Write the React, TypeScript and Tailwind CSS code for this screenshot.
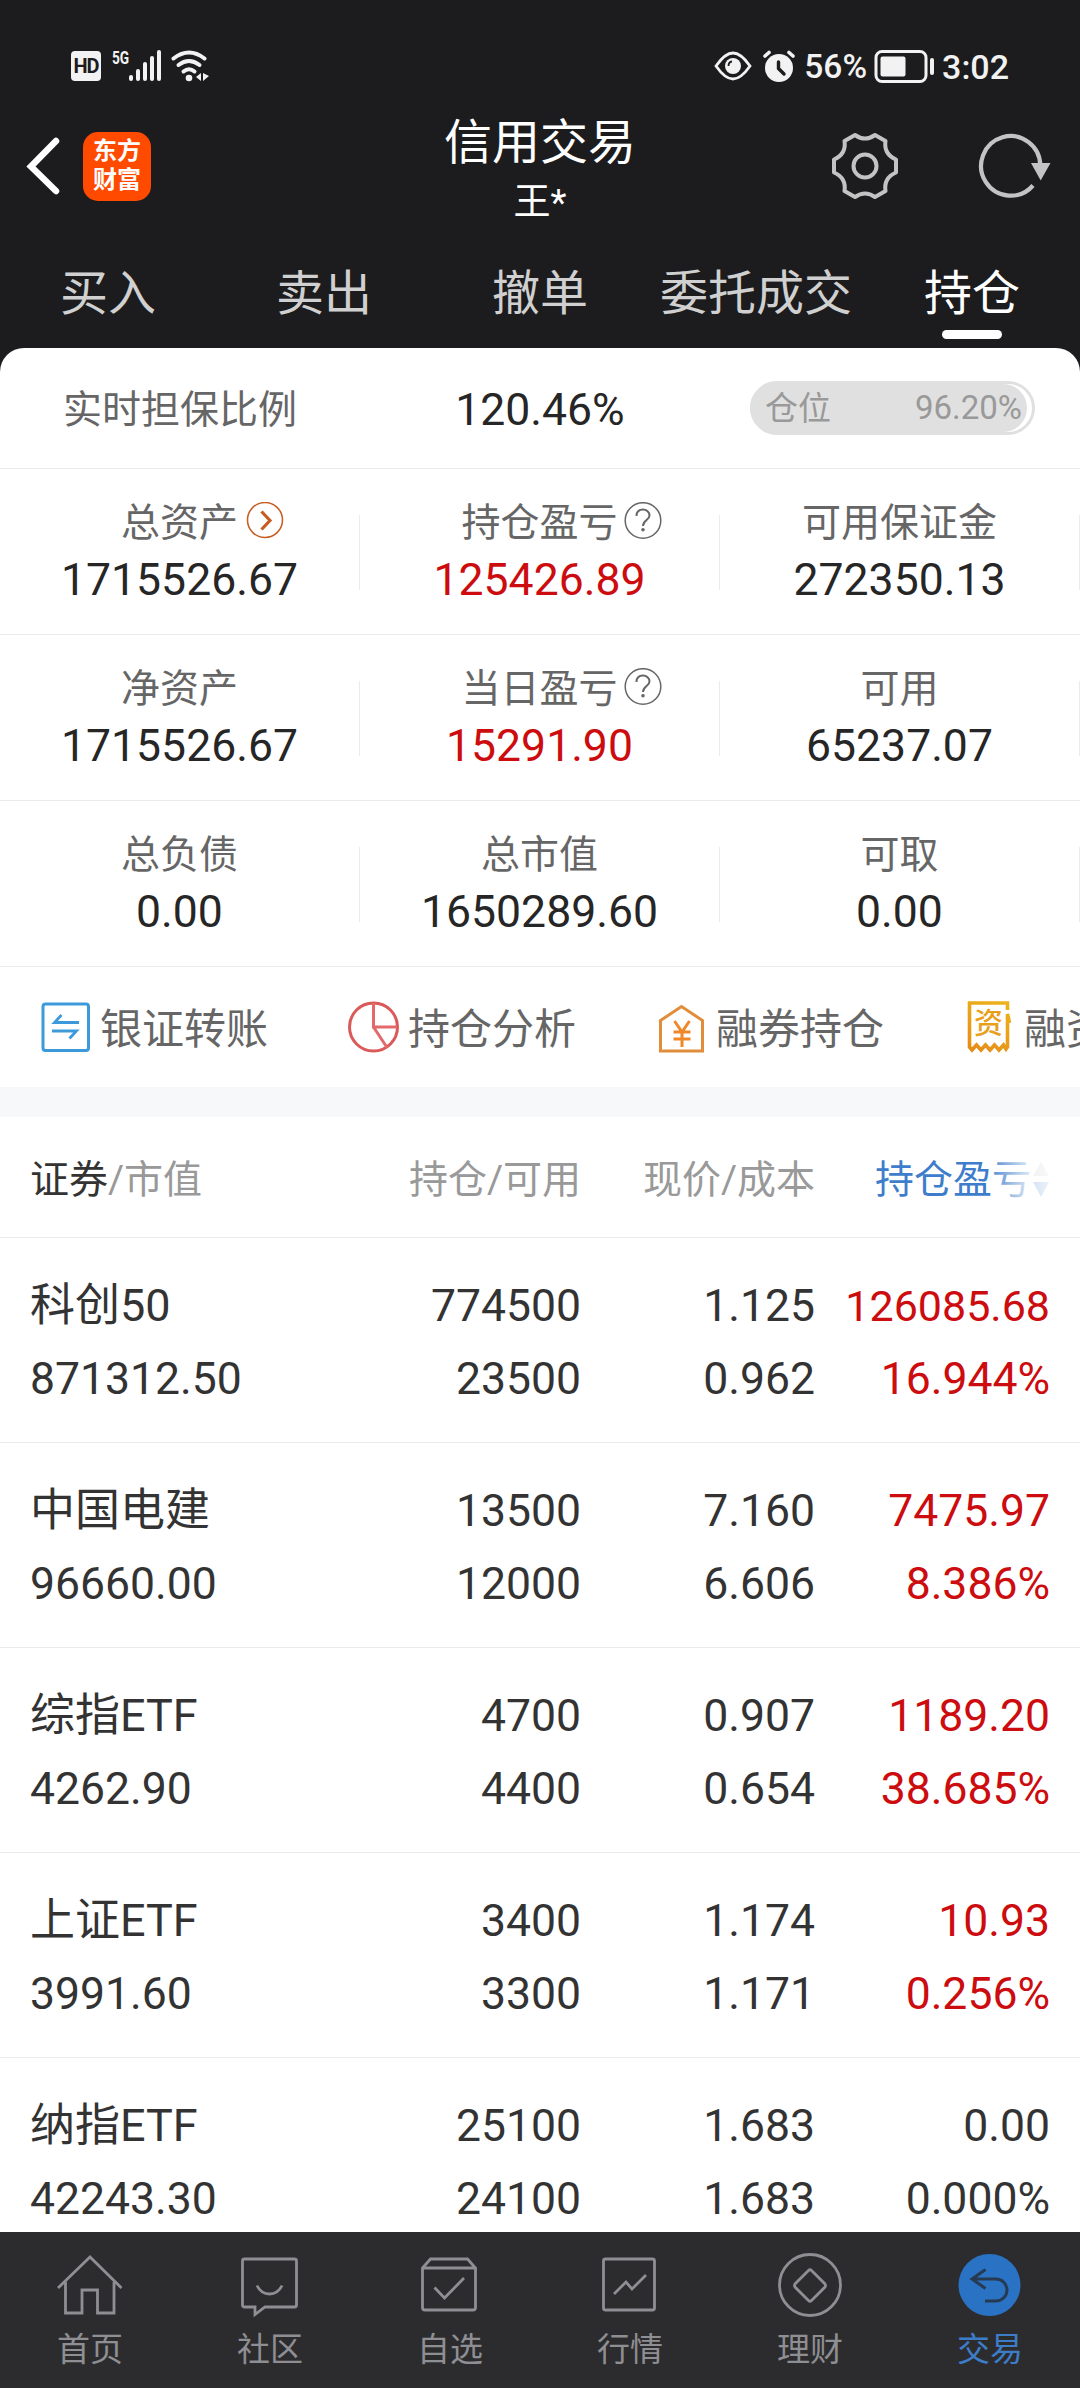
import React from "react";

const tabs = ["买入", "卖出", "撤单", "委托成交", "持仓"];

type Stat = { label: string; value: string; up?: boolean; icon?: "more" | "help" };

const stats: Stat[][] = [
  [
    { label: "总资产", value: "1715526.67", icon: "more" },
    { label: "持仓盈亏", value: "125426.89", up: true, icon: "help" },
    { label: "可用保证金", value: "272350.13" },
  ],
  [
    { label: "净资产", value: "1715526.67" },
    { label: "当日盈亏", value: "15291.90", up: true, icon: "help" },
    { label: "可用", value: "65237.07" },
  ],
  [
    { label: "总负债", value: "0.00" },
    { label: "总市值", value: "1650289.60" },
    { label: "可取", value: "0.00" },
  ],
];

const holdings = [
  { name: "科创50", value: "871312.50", qty: "774500", avail: "23500", price: "1.125", cost: "0.962", pl: "126085.68", rate: "16.944%", up: true },
  { name: "中国电建", value: "96660.00", qty: "13500", avail: "12000", price: "7.160", cost: "6.606", pl: "7475.97", rate: "8.386%", up: true },
  { name: "综指ETF", value: "4262.90", qty: "4700", avail: "4400", price: "0.907", cost: "0.654", pl: "1189.20", rate: "38.685%", up: true },
  { name: "上证ETF", value: "3991.60", qty: "3400", avail: "3300", price: "1.174", cost: "1.171", pl: "10.93", rate: "0.256%", up: true },
  { name: "纳指ETF", value: "42243.30", qty: "25100", avail: "24100", price: "1.683", cost: "1.683", pl: "0.00", rate: "0.000%", up: false },
];

const StatusBar: React.FC = () => (
  <div className="h-[100px] shrink-0 pl-[71px] pr-[71px] pt-8 flex items-center justify-between text-[#f2f2f2]">
    <div className="flex items-center">
      <div className="w-[30px] h-[30px] rounded-[4px] bg-[#f2f2f2] text-[#1c1c1e] text-[20px] leading-[30px] font-bold text-center tracking-[-1px]">
        HD
      </div>
      <span className="ml-[11px] mb-[17px] w-[17px] text-[19px] leading-[20px] font-bold origin-left scale-x-[0.72]">5G</span>
      <svg width="33" height="32" viewBox="17 0 33 32" fill="currentColor">
        <rect x="17" y="25" width="4" height="6" rx="2" />
        <rect x="24" y="19" width="4" height="12" rx="2" />
        <rect x="31" y="12" width="4" height="19" rx="2" />
        <rect x="38" y="6" width="4" height="25" rx="2" />
        <rect x="45" y="0" width="4" height="31" rx="2" />
      </svg>
      <svg className="ml-[9px]" width="38" height="32" viewBox="0 0 38 32" fill="none" stroke="currentColor" strokeWidth="4" strokeLinecap="round">
        <path d="M2.500 8.500Q18 -3.500 33.500 8.500" />
        <path d="M7.500 15Q18 7 28.500 15" />
        <path d="M12.500 21.500Q18 17 23.500 21.500" />
        <circle cx="18" cy="28" r="3.300" fill="currentColor" stroke="none" />
        <path d="M30 23v8l-5-4zM32 23v8l6-5z" fill="currentColor" stroke="none" />
      </svg>
    </div>
    <div className="flex items-center">
      <svg width="38" height="30" viewBox="0 0 38 30" fill="none" stroke="currentColor" strokeWidth="2.800">
        <path d="M2 15C9 5 14 2 19 2S29 5 36 15C29 25 24 28 19 28S9 25 2 15Z" />
        <circle cx="19" cy="15" r="8" fill="currentColor" stroke="none" />
        <path d="M14.500 15Q14.500 11 18 10.500" stroke="#1c1c1e" strokeWidth="1.800" />
      </svg>
      <svg className="ml-[11px]" width="32" height="32" viewBox="0 0 32 32" fill="none" stroke="currentColor" strokeLinecap="round">
        <circle cx="16" cy="18" r="14" fill="currentColor" stroke="none" />
        <path d="M2 6L6 2.500M30 6L26 2.500" strokeWidth="3.600" />
        <path d="M15.500 12v6.500l5.500 5.500" stroke="#1c1c1e" strokeWidth="3.400" />
      </svg>
      <span className="ml-[9px] pt-[2px] text-[33.500px] leading-[34px] font-medium">56%</span>
      <svg className="ml-[7px]" width="62" height="33" viewBox="0 0 62 33" fill="none" stroke="currentColor" strokeWidth="3">
        <rect x="2" y="1.500" width="50" height="30" rx="6" />
        <rect x="6.500" y="6.500" width="25" height="20" rx="2" fill="currentColor" stroke="none" />
        <rect x="56" y="8" width="4" height="17" rx="2" fill="currentColor" stroke="none" />
      </svg>
      <span className="ml-[6px] pt-[2px] text-[34px] leading-[34px] font-medium">3:02</span>
    </div>
  </div>
);

const TitleBar: React.FC = () => (
  <div className="h-[138px] shrink-0 grid grid-cols-3 text-white">
    <div className="flex items-center pl-[26px] pb-[6px]">
      <svg width="34" height="58" viewBox="0 0 34 58" fill="none" stroke="currentColor" strokeWidth="6.500" strokeLinecap="round">
        <path d="M30 4L5 29.500L30 54" />
      </svg>
      <div className="ml-[23px] w-[68px] h-[69px] rounded-[15px] bg-[#ff4a00] flex flex-col items-center justify-center font-bold text-[24px] leading-[29px]">
        <span>东方</span>
        <span>财富</span>
      </div>
    </div>
    <div className="flex flex-col items-center pt-[19px]">
      <h1 className="text-[48px] leading-[48px]">信用交易</h1>
      <span className="mt-[17px] text-[37px] leading-[37px]">王*</span>
    </div>
    <div className="flex items-center justify-end pr-[29px] pb-[6px] text-[#c3c3c3]">
      <svg width="68" height="68" viewBox="0 0 68 68" fill="none" stroke="currentColor" strokeWidth="4" strokeLinejoin="round">
        <circle cx="34" cy="34" r="11.500" />
        <path d="M24 3Q34 10 44 3L54.500 9Q52.500 22 65 27.500V40.500Q52.500 46 54.500 59L44 65Q34 58 24 65L13.500 59Q15.500 46 3 40.500V27.500Q15.500 22 13.500 9Z" />
      </svg>
      <svg className="ml-[78px]" width="74" height="68" viewBox="0 0 74 68" fill="none" stroke="currentColor" strokeWidth="4.200">
        <path d="M63.300 34A29.600 29.800 0 1 0 56 53.500" />
        <path d="M54 31H73.500L63.700 48.500Z" fill="currentColor" stroke="none" />
      </svg>
    </div>
  </div>
);

const Tabs: React.FC = () => (
  <nav className="h-[110px] shrink-0 grid grid-cols-5 text-[48px] leading-[48px] text-[#d0d0d0]">
    {tabs.map((tab) => (
      <div key={tab} className={`flex flex-col items-center pt-[32px] whitespace-nowrap ${tab === "持仓" ? "text-white" : ""}`}>
        {tab}
        {tab === "持仓" && <div className="mt-[12px] w-[60px] h-[9px] rounded-full bg-white" />}
      </div>
    ))}
  </nav>
);

const MoreIcon: React.FC = () => (
  <svg className="ml-[2px]" width="38" height="38" viewBox="0 0 38 38" fill="none" stroke="#c75d21">
    <circle cx="19" cy="18" r="17.500" strokeWidth="1.500" />
    <path d="M15.500 9.500L24 18.500L15.500 27.500" strokeWidth="3.200" />
  </svg>
);

const HelpIcon: React.FC = () => (
  <svg width="38" height="38" viewBox="0 0 38 38" fill="none" stroke="#666" strokeWidth="1.500">
    <circle cx="19" cy="18.500" r="17.800" />
    <path d="M12.500 14C12.500 9.500 15.500 7.500 19 7.500S25.500 10 25.500 13.500C25.500 18 19 18 19 24" strokeWidth="2" />
    <circle cx="19" cy="27.800" r="1.800" fill="#666" stroke="none" />
  </svg>
);

const StatRow: React.FC<{ items: Stat[] }> = ({ items }) => (
  <div className="h-[166px] shrink-0 grid grid-cols-3 items-center border-b border-[#ebebeb]">
    {items.map((item) => (
      <div key={item.label} className="h-[166px] flex items-center">
        <div className="flex-1 flex flex-col items-center pt-[1px]">
          <div className="relative text-[39px] leading-[40px] text-[#666]">
            {item.label}
            {item.icon && (
              <span className="absolute left-full -top-px ml-[6px]">
                {item.icon === "more" ? <MoreIcon /> : <HelpIcon />}
              </span>
            )}
          </div>
          <div className={`mt-[14px] text-[44.500px] leading-[46px] ${item.up ? "text-[#cc0c0e]" : "text-[#262626]"}`}>
            {item.value}
          </div>
        </div>
        <div className="w-px h-[75px] bg-[#ebebeb]" />
      </div>
    ))}
  </div>
);

const TransferIcon: React.FC = () => (
  <svg width="51" height="52" viewBox="0 0 51 52" fill="none" stroke="#3c9adb">
    <rect x="3" y="3" width="45.500" height="46.500" rx="2.500" strokeWidth="3" />
    <path d="M39 21.500H14.500L21.500 14M12 30H36.500L29.500 37.500" strokeWidth="2.800" />
  </svg>
);

const PieIcon: React.FC = () => (
  <svg width="51" height="52" viewBox="0 0 51 52" fill="none" stroke="#db5959" strokeWidth="3">
    <circle cx="25.500" cy="26" r="24" />
    <path d="M25.500 2V26H49M25.500 26L39 46.500" stroke="#e36a6a" />
  </svg>
);

const HouseIcon: React.FC = () => (
  <svg width="51" height="52" viewBox="0 0 51 52" fill="none" stroke="#e08d3c" strokeWidth="3">
    <path d="M4.500 19.500L25.500 5.500L46.500 19.500V50H4.500Z" />
    <path d="M18.500 20L26 31L33.500 20M17.500 31H34.500M17.500 38H34.500M26 31V46" stroke="#f0882a" />
  </svg>
);

const ReceiptIcon: React.FC = () => (
  <svg width="51" height="52" viewBox="0 0 51 52" fill="none" stroke="url(#receipt)" strokeWidth="3.600">
    <defs>
      <linearGradient id="receipt" gradientUnits="userSpaceOnUse" x1="40" y1="0" x2="12" y2="52">
        <stop offset="0" stopColor="#ecb41c" />
        <stop offset="1" stopColor="#e68c18" />
      </linearGradient>
    </defs>
    <path d="M43.500 9V2H5.500V46L8 49L12.500 44L17 49L21.500 44L26 49L30.500 44L35 49L39.500 44L42 48L43.500 46V13L45.500 22" />
    <text x="24.500" y="32.500" fontSize="29" fontWeight="500" textAnchor="middle" fill="#e8a01a" stroke="none">资</text>
  </svg>
);

const actions = [
  { label: "银证转账", Icon: TransferIcon },
  { label: "持仓分析", Icon: PieIcon },
  { label: "融券持仓", Icon: HouseIcon },
  { label: "融资持仓", Icon: ReceiptIcon },
];

const Actions: React.FC = () => (
  <div className="h-[120px] shrink-0 pl-10 flex items-center gap-20 overflow-hidden">
    {actions.map(({ label, Icon }) => (
      <div key={label} className="flex items-center gap-[9px] shrink-0">
        <Icon />
        <span className="w-[168px] pt-[6px] text-[42px] leading-[44px] text-[#666] whitespace-nowrap">{label}</span>
      </div>
    ))}
  </div>
);

const Holdings: React.FC = () => (
  <div className="flex-1 min-h-0 overflow-hidden">
    <div className="h-[121px] grid grid-cols-[271px_280px_234px_235px] px-[30px] pt-[5px] items-center text-right text-[39px] leading-[40px] text-[#999] border-b border-[#ebebeb]">
      <div className="text-left">
        <span className="text-[#333]">证券</span>/市值
      </div>
      <div>持仓/可用</div>
      <div>现价/成本</div>
      <div className="relative flex items-center justify-end">
        <span className="text-[#3d7dcb]">持仓盈亏</span>
        <svg className="ml-px" width="18" height="36" viewBox="0 0 18 36">
          <path d="M9 0L17 14H1Z" fill="#c4c4c4" />
          <path d="M9 35L17 20H1Z" fill="#3d7dcb" />
        </svg>
        <div className="absolute right-0 top-0 w-[60px] h-full bg-linear-to-r from-white/10 via-white/75 via-60% to-white/90" />
      </div>
    </div>
    {holdings.map((row) => (
      <div
        key={row.name}
        className="h-[205px] grid grid-cols-[271px_280px_234px_235px] content-start gap-y-[27px] px-[30px] pt-[45px] text-right text-[44.500px] leading-[46px] text-[#333] border-b border-[#ebebeb]"
      >
        <div className="text-left text-[45px]">{row.name}</div>
        <div>{row.qty}</div>
        <div>{row.price}</div>
        <div className={`${row.up ? "text-[#cc0c0e]" : ""} ${row.pl.length > 8 ? "text-[43px]" : ""}`}>{row.pl}</div>
        <div className="text-left">{row.value}</div>
        <div>{row.avail}</div>
        <div>{row.cost}</div>
        <div className={row.up ? "text-[#cc0c0e]" : ""}>{row.rate}</div>
      </div>
    ))}
  </div>
);

const navItems = [
  { label: "首页", icon: <path d="M4 39L36 8L67.500 39M11.500 33V64H28V41H43.500V64H60V33" /> },
  {
    label: "社区",
    icon: (
      <>
        <path d="M10.500 10H60.500Q62.500 10 62.500 12V56Q62.500 58 60.500 58H31L21 65.500V58H10.500Q8.500 58 8.500 56V12Q8.500 10 10.500 10Z" />
        <path d="M23 36.500Q27 45 35.500 45T48 36.500" />
      </>
    ),
  },
  {
    label: "自选",
    icon: (
      <>
        <path d="M8.500 19L16.500 10H53.500L61.500 19V58.500Q61.500 61 59 61H11Q8.500 61 8.500 58.500ZM8.500 19H61.500" />
        <path d="M20.500 38.500L30.500 49L50 29" />
      </>
    ),
  },
  {
    label: "行情",
    icon: (
      <>
        <rect x="9.500" y="10" width="51" height="51" rx="2" />
        <path d="M20 45L32 33L38 40L52 26" />
      </>
    ),
  },
  {
    label: "理财",
    icon: (
      <>
        <circle cx="36" cy="36" r="30.500" />
        <path d="M34.500 21.500Q36 20 37.500 21.500L51 35Q52 36.500 51 38L37.500 51.500Q36 53 34.500 51.500L21 38Q20 36.500 21 35Z" />
      </>
    ),
  },
  {
    label: "交易",
    icon: (
      <>
        <circle cx="35.500" cy="36" r="31" fill="#2a72c4" stroke="none" />
        <path d="M31.500 20.500L18 30L31.500 39.500M18 30H42A11 11 0 0 1 42 52H31" stroke="#263a52" strokeWidth="3" />
      </>
    ),
  },
];

const BottomNav: React.FC = () => (
  <nav className="h-[156px] shrink-0 bg-[#2c2c2e] grid grid-cols-6 pt-[17px] text-[#8e8e93]">
    {navItems.map(({ label, icon }) => (
      <div key={label} className={`flex flex-col items-center ${label === "交易" ? "text-[#3d7dc8]" : ""}`}>
        <svg width="72" height="72" viewBox="0 0 72 72" fill="none" stroke="currentColor" strokeWidth="2.800">
          {icon}
        </svg>
        <span className="mt-[12px] text-[33px] leading-[34px]">{label}</span>
      </div>
    ))}
  </nav>
);

export default function App() {
  return (
    <div className="w-[1080px] h-[2388px] overflow-hidden flex flex-col bg-[#1c1c1e] font-['Roboto','Noto_Sans_CJK_SC',sans-serif]">
      <StatusBar />
      <TitleBar />
      <Tabs />
      <main className="flex-1 min-h-0 flex flex-col rounded-t-[24px] bg-white overflow-hidden">
        <div className="h-[121px] shrink-0 grid grid-cols-3 items-center border-b border-[#ebebeb]">
          <div className="pt-[4px] text-center text-[39px] leading-[40px] text-[#666]">实时担保比例</div>
          <div className="pt-[3px] text-center text-[44.500px] leading-[46px] text-[#262626]">120.46%</div>
          <div className="ml-[30px] w-[285px] h-[54px] rounded-full border-[3px] border-[#e0e0e0] text-[#999]">
            <div className="-ml-[3px] w-[277px] h-[48px] rounded-full bg-[#e0e0e0] pl-[15px] pr-[5px] flex items-center justify-between text-[33px] leading-[34px]">
              <span className="pt-px">仓位</span>
              <span>96.20%</span>
            </div>
          </div>
        </div>
        {stats.map((items) => (
          <StatRow key={items[0].label} items={items} />
        ))}
        <Actions />
        <div className="h-[30px] shrink-0 bg-[#f6f8fa]" />
        <Holdings />
      </main>
      <BottomNav />
    </div>
  );
}
